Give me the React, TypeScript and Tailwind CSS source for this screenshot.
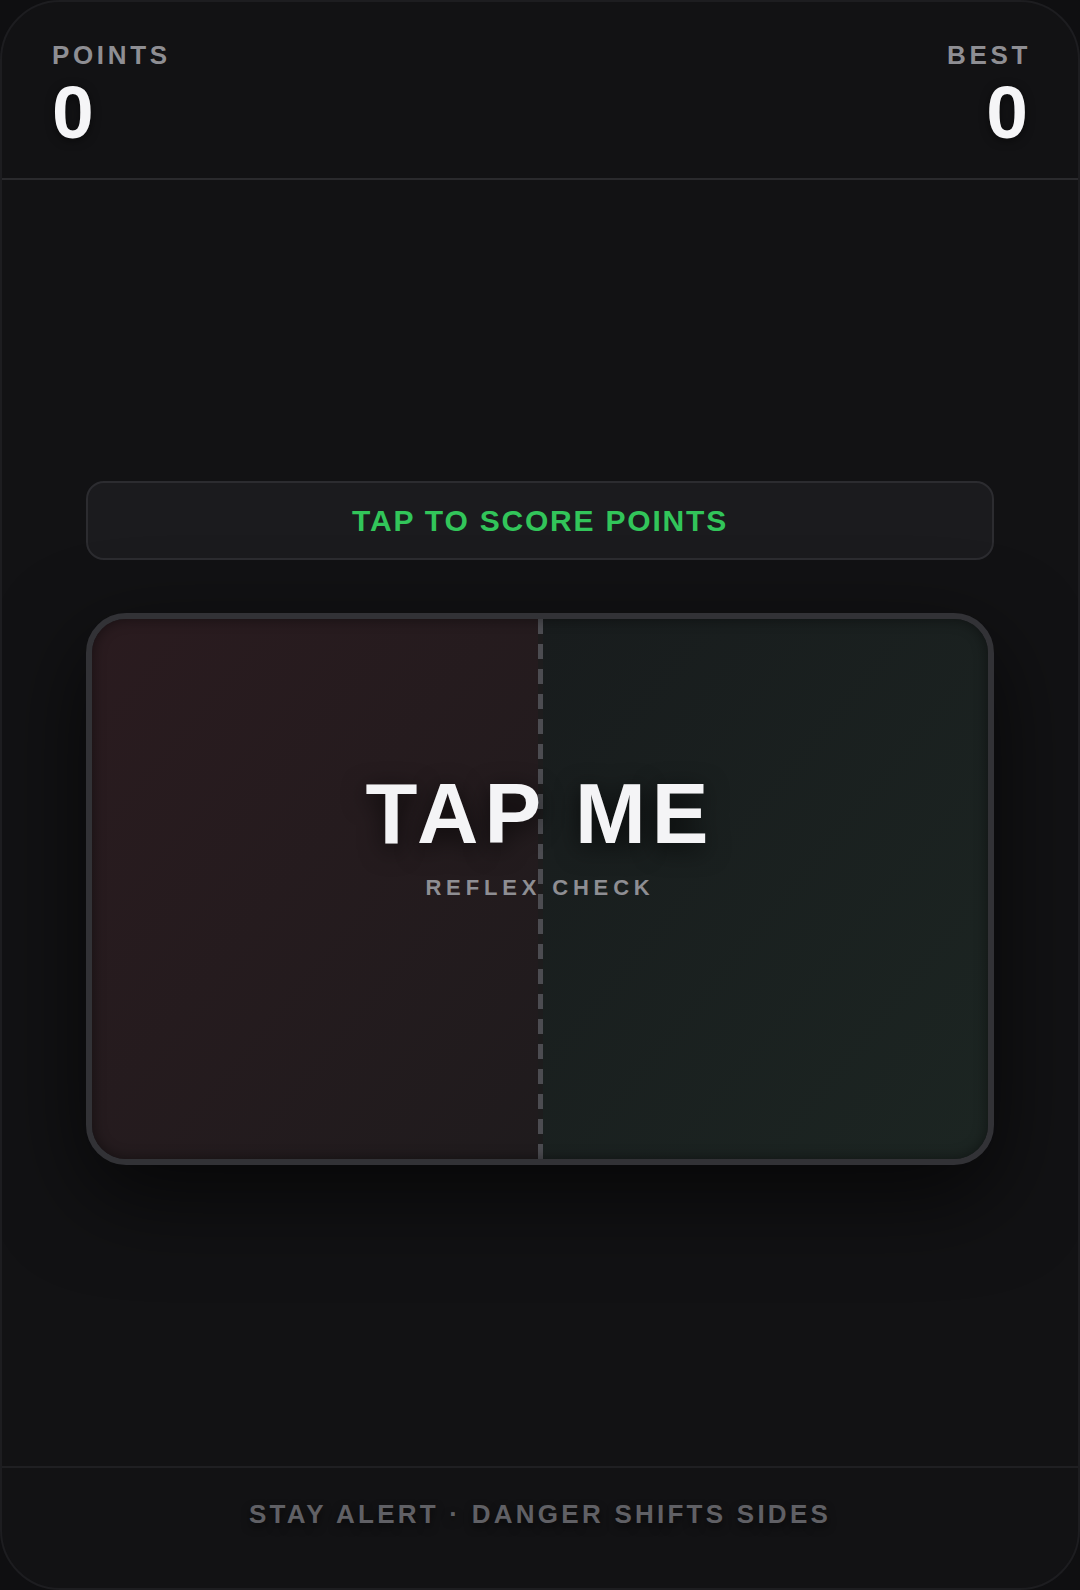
export default function App() {
  return (
    <div className="w-[1080px] h-[1590px] bg-[#0f0f11] font-['Liberation_Sans',Arial,sans-serif]">
      <div className="h-full flex flex-col bg-[#121214] rounded-[60px] border-2 border-[#1d1d20] overflow-hidden">
        {/* Score header */}
        <header className="flex-none flex items-start justify-between px-[50px] pt-[40px] pb-[28px] border-b-2 border-[#2a2a2d]">
          <div className="flex flex-col items-start">
            <span className="text-[26px] leading-none font-bold tracking-[0.14em] text-[#8e8e93]">POINTS</span>
            <span className="mt-[7px] text-[75px] leading-none font-bold text-[#f5f5f7] [text-shadow:0_2px_10px_rgba(0,0,0,0.5)]">
              0
            </span>
          </div>
          <div className="flex flex-col items-end">
            <span className="text-[26px] leading-none font-bold tracking-[0.14em] -mr-[3px] text-[#8e8e93]">BEST</span>
            <span className="mt-[7px] text-[75px] leading-none font-bold text-[#f5f5f7] [text-shadow:0_2px_10px_rgba(0,0,0,0.5)]">
              0
            </span>
          </div>
        </header>

        {/* Play area */}
        <main className="flex-1 flex flex-col justify-center px-[84px]">
          <div className="h-[79px] flex items-center justify-center rounded-[18px] border-2 border-[#2c2c30] bg-[#1b1b1e]">
            <span className="text-[30px] leading-none font-bold tracking-[0.06em] text-[#32c55a]">TAP TO SCORE POINTS</span>
          </div>

          <div className="relative mt-[53px] h-[552px] flex rounded-[40px] border-[6px] border-[#323236] overflow-hidden shadow-[0_30px_90px_rgba(0,0,0,0.65)]">
            <div className="flex-1 bg-linear-to-br from-[#2a1b1f] to-[#1f1b1d]" />
            <div className="w-[5px] flex-none bg-[repeating-linear-gradient(to_bottom,#4c4c51_0px,#4c4c51_15px,transparent_15px,transparent_25px)] bg-[#1d1c1d]" />
            <div className="flex-1 bg-linear-to-br from-[#181c1d] to-[#1c2522]" />
            <div className="pointer-events-none absolute inset-0 rounded-[34px] shadow-[inset_0_0_14px_rgba(0,0,0,0.45)]" />

            {/* Label over both halves */}
            <div className="absolute inset-0 flex flex-col items-center pt-[152px]">
              <span className="text-[85px] leading-none font-bold tracking-[0.07em] text-[#f4f4f6] [text-shadow:0_6px_24px_rgba(0,0,0,0.7)]">
                TAP ME
              </span>
              <span className="mt-[21px] text-[22px] leading-none font-bold tracking-[0.22em] text-[#8e8e93]">REFLEX CHECK</span>
            </div>
          </div>
        </main>

        {/* Footer hint */}
        <footer className="flex-none h-[122px] flex justify-center pt-[33px] border-t-2 border-[#1f1f22]">
          <span className="text-[26px] leading-none font-bold tracking-[0.125em] text-[#606065] [text-shadow:0_4px_8px_rgba(0,0,0,0.6)]">
            STAY ALERT · DANGER SHIFTS SIDES
          </span>
        </footer>
      </div>
    </div>
  );
}
